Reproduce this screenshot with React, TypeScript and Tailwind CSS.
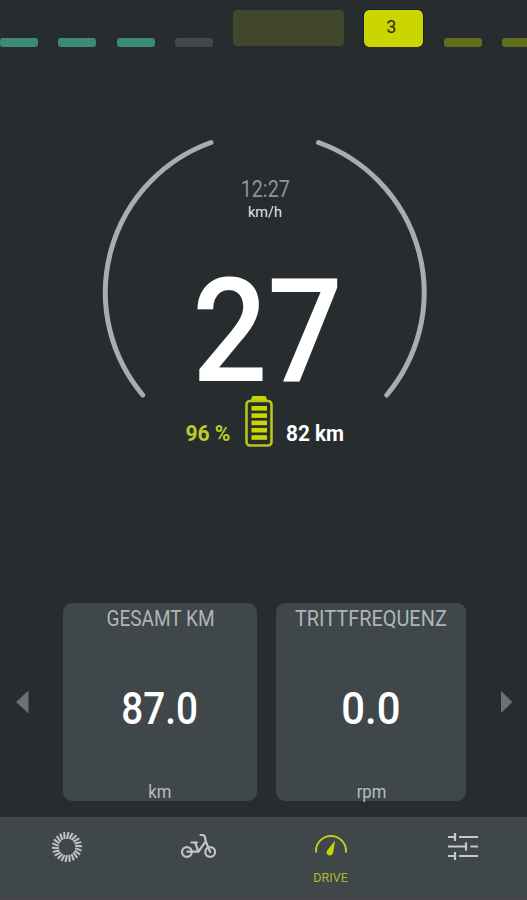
import React from "react";

function Segment({ tone }: { tone: string }) {
  return <div className={`h-[9px] w-[38px] shrink-0 rounded-[3px] ${tone}`} />;
}

function AssistBar() {
  return (
    <div className="flex h-[47px] items-end gap-[20.3px] overflow-hidden">
      <Segment tone="bg-[#3b8b73]" />
      <Segment tone="bg-[#3b8b73]" />
      <Segment tone="bg-[#3b8b73]" />
      <Segment tone="bg-[#42494c]" />
      <div className="mb-px h-[36px] w-[111px] shrink-0 rounded-[4px] bg-[#41472b]" />
      <div className="flex h-[37px] w-[59px] shrink-0 items-center justify-center rounded-[5px] bg-[#cbd500] pr-[6px] text-[19px] leading-none text-[#272b20] outline outline-1 outline-[#1b2028]">
        <span className="block -translate-y-[2px] scale-x-[0.95]">3</span>
      </div>
      <Segment tone="bg-[#626e1d]" />
      <Segment tone="bg-[#626e1d]" />
    </div>
  );
}

function Battery() {
  return (
    <svg className="h-[52px] w-[28px] shrink-0" viewBox="0 0 28 52" fill="#cad600">
      <path d="M7 1.8Q7 1 8.5 1h11q1.500 0 1.500.8L22.500 6h-17Z" />
      <rect x="1.500" y="6" width="25" height="44.500" rx="3.500" fill="none" stroke="#b7c51d" strokeWidth="2.600" />
      <rect x="6.500" y="11" width="15.500" height="4.600" />
      <rect x="6.500" y="18.300" width="15.500" height="4.600" />
      <rect x="6.500" y="25.600" width="15.500" height="4.600" />
      <rect x="6.500" y="32.900" width="15.500" height="4.600" />
      <rect x="6.500" y="40.200" width="15.500" height="4.600" />
    </svg>
  );
}

function Dial() {
  return (
    <section className="relative mt-[83px] flex h-[473px] flex-col items-center">
      <svg className="absolute inset-x-0 top-0 h-[280px] w-full" viewBox="0 130 527 280" fill="none" stroke="#a8adaf" strokeWidth="5" strokeLinecap="round">
        <path d="M211 142.500A159.300 159.300 0 0 0 142.700 395" />
        <path d="M318.500 142.500A159.300 159.300 0 0 1 386.800 395" />
      </svg>
      <div className="mt-[47px] h-[26px] pl-[3px] text-[23.500px] leading-[24px] text-[#8f9496]">
        <span className="block scale-x-[0.84]">12:27</span>
      </div>
      <div className="h-[20px] pl-[3px] text-[14.500px] leading-[20px] text-[#e2e5e6]">
        <span className="block">km/h</span>
      </div>
      <div className="mt-[33px] h-[148px] pl-[7px] text-[145px] font-medium leading-[150px] text-white">
        <span className="block scale-x-[0.913]">27</span>
      </div>
      <div className="-mt-[9px] flex h-[52px] w-full items-start justify-center pl-[2px] text-[21.500px] font-bold leading-[24px]">
        <div className="mr-[14px] mt-[27px] flex w-[47px] justify-center text-[#bdcb25]">
          <span className="shrink-0 scale-x-[0.98]">96 %</span>
        </div>
        <Battery />
        <div className="ml-[13px] mt-[27px] flex w-[59px] justify-center text-white">
          <span className="shrink-0 scale-x-[0.965]">82 km</span>
        </div>
      </div>
    </section>
  );
}

interface StatProps {
  title: string;
  value: string;
  unit: string;
  box: string;
  titleFit: string;
  valueFit: string;
}

function Stat({ title, value, unit, box, titleFit, valueFit }: StatProps) {
  return (
    <article className={`flex h-[198px] shrink-0 flex-col items-center rounded-[9px] bg-[#3f474a] ${box}`}>
      <h2 className="mt-[4px] h-[24px] whitespace-nowrap text-[22px] leading-[24px] text-[#afb5b8]">
        <span className={`block ${titleFit}`}>{title}</span>
      </h2>
      <div className="mt-[54px] h-[48px] text-[45px] font-medium leading-[48px] text-white">
        <span className={`block ${valueFit}`}>{value}</span>
      </div>
      <div className="mt-[47px] text-[18.500px] leading-[24px] text-[#b8bdbf]">
        <span className="block scale-x-[0.9]">{unit}</span>
      </div>
    </article>
  );
}

function Stats() {
  return (
    <section className="flex h-[198px] items-center">
      <svg className="ml-[16px] mr-[34px] h-[24px] w-[13px] shrink-0" viewBox="0 0 13 24" fill="#6c7173">
        <path d="M12.500.5v23L0 12Z" />
      </svg>
      <Stat title="GESAMT KM" value="87.0" unit="km" box="w-[194px]" titleFit="scale-x-[0.865]" valueFit="scale-x-[0.86]" />
      <Stat title="TRITTFREQUENZ" value="0.0" unit="rpm" box="ml-[19px] w-[190px]" titleFit="scale-x-[0.905]" valueFit="scale-x-[0.93]" />
      <svg className="ml-[35px] h-[24px] w-[12px] shrink-0" viewBox="0 0 12 24" fill="#6c7173">
        <path d="M0 1v22L11.500 12Z" />
      </svg>
    </section>
  );
}

const rays = Array.from({ length: 22 }, (_, i) => (i * 360) / 22);

function NavBar() {
  return (
    <nav className="mt-[16px] grid h-[83px] grid-cols-4 border-b border-t border-b-[#50464f] border-t-[#43494c] bg-[#3f474a]">
      <div className="flex justify-center pl-[2px]">
        <svg className="mt-[13px] h-[32px] w-[32px]" viewBox="-16 -16 32 32" stroke="#c0c5c7" strokeWidth="2">
          {rays.map((a) => (
            <line key={a} x1="0" y1="-8.300" x2="1.500" y2="-15" transform={`rotate(${a})`} />
          ))}
        </svg>
      </div>
      <div className="flex justify-center">
        <svg className="mt-[14px] h-[28px] w-[38px]" viewBox="0 0 38 28" fill="none" stroke="#c0c5c7" strokeWidth="2.200" strokeLinejoin="round" strokeLinecap="round">
          <circle cx="7.900" cy="20" r="4.900" />
          <circle cx="31.200" cy="20" r="4.900" />
          <path d="M8.500 19.700H19.500L26.500 9.500M12.500 10.500h5.500M16 10.500L19.500 19.700M21.500 3h2q2 0 2.500 2.500L27 10 31.200 20" />
        </svg>
      </div>
      <div className="flex flex-col items-center pl-[2px]">
        <svg className="ml-[2px] mt-[14px] h-[24px] w-[36px]" viewBox="0 0 36 24" fill="none" stroke="#c2ce16" strokeWidth="2">
          <path d="M3 20.500v-1.500a15 15 0 0 1 30 0v1.500" />
          <path d="M22 8.500l-1.800 12.300a3.300 3.300 0 1 1-6-2.400Z" fill="#cad600" stroke="none" />
        </svg>
        <div className="mt-[12px] text-[13.500px] leading-[18px] text-[#adb92d]">
          <span className="block scale-x-[0.93]">DRIVE</span>
        </div>
      </div>
      <div className="flex justify-center pl-[4px]">
        <svg className="mt-[14px] h-[30px] w-[32px]" viewBox="0 0 32 30" stroke="#c4c9cb" strokeWidth="2">
          <path d="M1 5h6.500M12 5h19M1 14.500h17M23.500 14.500h7.500M1 24h6.500M12 24h19" />
          <path d="M8 1v8M19 10.500v8M8 20v8" strokeWidth="2.200" />
        </svg>
      </div>
    </nav>
  );
}

export default function App() {
  return (
    <main className="h-[900px] w-[527px] overflow-hidden bg-[#272c2f] font-['Roboto',sans-serif]">
      <AssistBar />
      <Dial />
      <Stats />
      <NavBar />
    </main>
  );
}
